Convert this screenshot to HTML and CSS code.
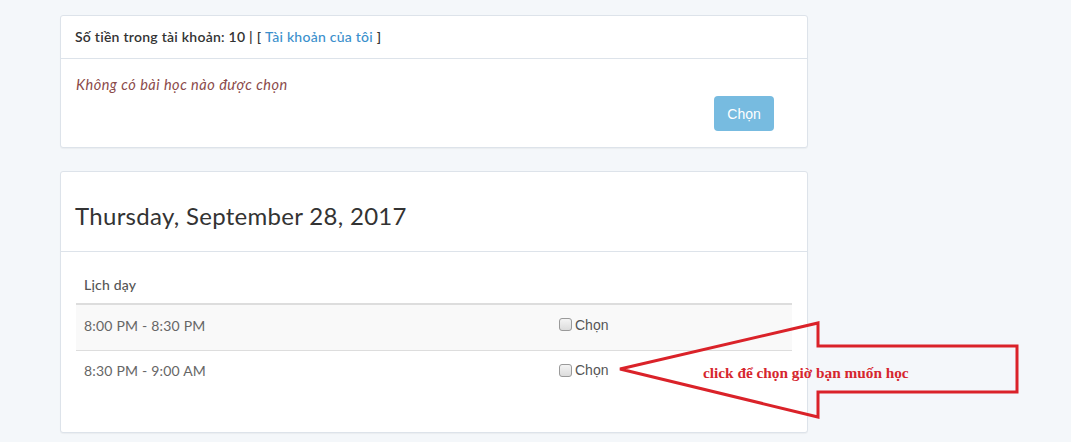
FILE: index.html
```html
<!DOCTYPE html>
<html lang="vi">
<head>
<meta charset="utf-8">
<link rel="stylesheet" href="styles.css">
</head>
<body>
<div class="page">
  <div class="panel">
    <div class="panel-heading">Số tiền trong tài khoản: 10 | [ <a class="link" href="#">Tài khoản của tôi</a> ]</div>
    <div class="panel-body cart">
      <p class="empty">Không có bài học nào được chọn</p>
      <div class="actions"><button class="btn" disabled>Chọn</button></div>
    </div>
  </div>

  <div class="panel schedule">
    <div class="panel-heading big"><h2 class="date">Thursday, September 28, 2017</h2></div>
    <div class="panel-body">
      <table class="table">
        <thead><tr><th colspan="2">Lịch dạy</th></tr></thead>
        <tbody>
          <tr class="odd"><td class="time">8:00 PM - 8:30 PM</td><td class="pick"><label><input type="checkbox"> Chọn</label></td></tr>
          <tr><td class="time">8:30 PM - 9:00 AM</td><td class="pick"><label><input type="checkbox"> Chọn</label></td></tr>
        </tbody>
      </table>
    </div>
  </div>
</div>
<svg class="callout" width="1071" height="442" viewBox="0 0 1071 442">
  <polygon points="620,369 818,323 818,346 1017,346 1017,392 818,392 818,417" fill="none" stroke="#da2229" stroke-width="3" stroke-linejoin="miter"/>
  <text x="703" y="378" class="callout-text">click để chọn giờ bạn muốn học</text>
</svg>
</body>
</html>
```
FILE: styles.css
```css
html, body { margin: 0; padding: 0; }
body {
  background: #f4f7fa;
  font-family: "Lato", "Open Sans", sans-serif;
  color: #333;
  width: 1071px;
  height: 442px;
  overflow: hidden;
  position: relative;
}
.page {
  padding: 15px 0 0 60px;
  width: 748px;
}
.panel {
  background: #fff;
  border: 1px solid #dde3ea;
  border-radius: 3px;
  box-sizing: border-box;
  box-shadow: 0 1px 1px rgba(0,0,0,0.04);
}
.panel + .panel { margin-top: 23px; }
.panel-heading {
  height: 43px;
  box-sizing: border-box;
  border-bottom: 1px solid #dde3ea;
  padding: 12px 15px 0 14px;
  font-size: 14px;
  font-weight: 600;
  color: #333;
  letter-spacing: 0.25px;
}
.link { color: #3a8fcc; text-decoration: none; font-weight: 500; }
.cart { padding: 16px 33px 15px 15px; height: 88px; box-sizing: border-box; }
.empty {
  margin: 0;
  font-style: italic;
  font-size: 14.5px;
  color: #8b4a4a;
  line-height: 20px;
  letter-spacing: 0.5px;
}
.actions { display: flex; justify-content: flex-end; margin-top: 1px; }
.btn {
  width: 60px;
  height: 35px;
  border: 0;
  border-radius: 4px;
  background: #77bbe0;
  color: #fff;
  font-family: "Liberation Sans", Arial, sans-serif;
  font-size: 14px;
  padding: 0;
}
.schedule { height: 262px; }
.panel-heading.big { height: 80px; padding: 27px 15px 0 14px; letter-spacing: 0.3px; }
.date {
  margin: 0;
  font-size: 24px;
  font-weight: 400;
  color: #333;
  line-height: 34px;
}
.schedule .panel-body { padding: 14px 15px 0; }
.table { width: 100%; border-collapse: collapse; font-size: 14px; }
.table th {
  text-align: left;
  font-weight: 500;
  color: #555;
  padding: 0 8px;
  height: 38px;
  box-sizing: border-box;
  border-bottom: 2px solid #dddddd;
  vertical-align: middle;
  letter-spacing: 0.2px;
}
.table td {
  height: 46px;
  box-sizing: border-box;
  padding: 0 8px 4px;
  color: #666;
  vertical-align: middle;
  letter-spacing: 0.2px;
}
.table tbody tr + tr td { border-top: 1px solid #dddddd; height: 46px; padding-bottom: 5px; }
.table tr.odd td { background: #f9f9f9; }
.time { width: 475px; }
.pick label {
  font-family: "Liberation Sans", Arial, sans-serif;
  font-size: 14px;
  color: #555;
  display: inline-flex;
  align-items: center;
  gap: 3px;
  letter-spacing: 0;
}
.pick input {
  appearance: none;
  -webkit-appearance: none;
  margin: 0;
  width: 13px;
  height: 13px;
  border: 1px solid #9a9a9a;
  border-radius: 3px;
  background: linear-gradient(#f4f4f4, #dcdcdc);
  box-sizing: border-box;
}
.callout { position: absolute; left: 0; top: 0; pointer-events: none; }
.callout-text {
  font-family: "Liberation Serif", "Times New Roman", serif;
  font-weight: 700;
  font-size: 15.3px;
  fill: #d6262e;
}
```
